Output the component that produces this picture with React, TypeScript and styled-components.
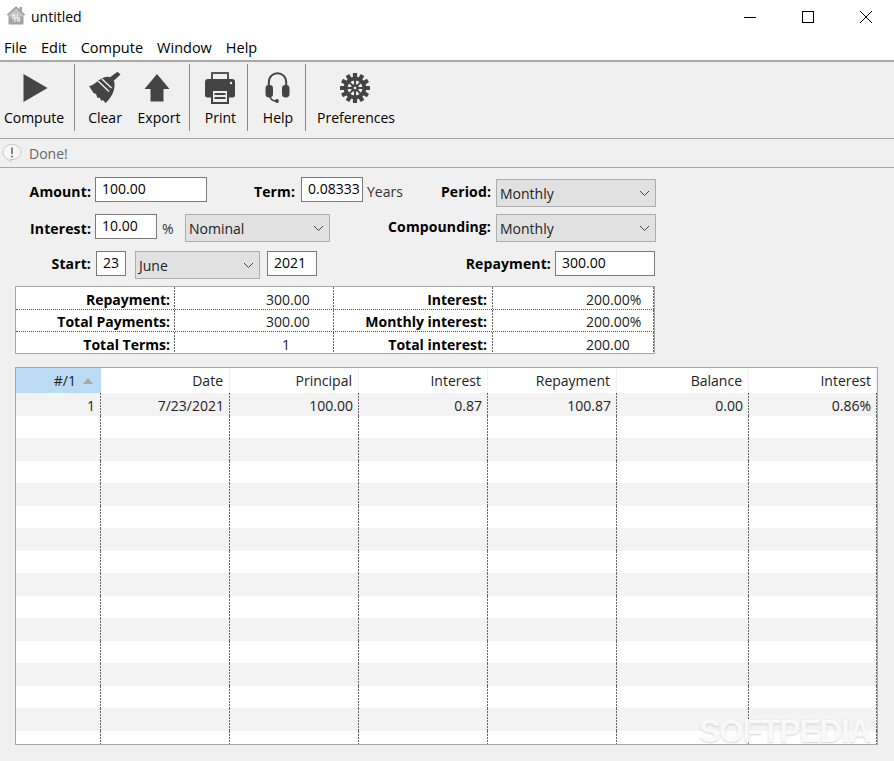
import React from 'react';
import styled, { createGlobalStyle } from 'styled-components';

const Global = createGlobalStyle`
  html, body { margin: 0; padding: 0; background: #f0f0f0; }
  #root { width: 894px; height: 761px; overflow: hidden; }
  * { box-sizing: border-box; }
`;

const Window = styled.div`
  position: relative;
  width: 894px;
  height: 761px;
  display: flex;
  flex-direction: column;
  overflow: hidden;
  background: #f0f0f0;
  color: #000;
  font-family: "Open Sans", "Noto Sans", sans-serif;
  font-size: 14px;
`;

const TitleBar = styled.div`
  height: 33px;
  background: #fff;
  display: flex;
  align-items: center;
  padding-left: 6px;
`;
const TitleLogo = styled.div`
  display: flex;
  margin-top: -3px;
`;
const TitleText = styled.span`
  margin-left: 5px;
  font-size: 14px;
`;
const WindowButtons = styled.div`
  margin-left: auto;
  display: flex;
`;
const WindowButton = styled.div`
  width: 58px;
  height: 33px;
  display: flex;
  align-items: center;
  justify-content: center;
  margin-right: ${p => p.$last ? '-1px' : '0'};
`;
const MenuBar = styled.div`
  height: 27px;
  background: #fff;
  display: flex;
  align-items: center;
  gap: 14px;
  padding: 2px 0 0 4px;
`;
const MenuItem = styled.span`
  font-size: 14.5px;
`;
const Toolbar = styled.div`
  height: 79px;
  border-top: 2px solid #a8a8a8;
  border-bottom: 1px solid #a8a8a8;
  display: flex;
  align-items: stretch;
  padding: 2px 0 7px;
`;
const ToolGroup = styled.div`
  width: ${p => p.$w}px;
  flex: none;
  display: flex;
  padding-left: ${p => p.$pl ?? 0}px;
  border-right: ${p => p.$noSep ? 'none' : '1px solid #8a8a8a'};
`;
const ToolButton = styled.div`
  width: ${p => p.$w}px;
  flex: none;
  display: flex;
  flex-direction: column;
  align-items: center;
  padding-top: 7px;
`;
const ToolIcon = styled.div`
  height: 33px;
  width: 100%;
  display: flex;
  justify-content: center;
  align-items: center;
  overflow: visible;
  padding-left: ${p => Math.max((p.$dx ?? 0) * 2, 0)}px;
  padding-right: ${p => Math.max(-(p.$dx ?? 0) * 2, 0)}px;
`;
const ToolLabel = styled.span`
  margin-top: 5px;
  font-size: 14px;
  line-height: 18px;
  white-space: nowrap;
`;
const StatusBar = styled.div`
  height: 29px;
  border-bottom: 1px solid #a8a8a8;
  display: flex;
  align-items: center;
  padding-left: 2px;
  gap: 7px;
  color: #666;
  font-size: 14px;
`;
const Form = styled.div`
  display: flex;
  flex-direction: column;
`;
const FormRow = styled.div`
  display: flex;
  align-items: flex-start;
  height: ${p => p.$h}px;
  margin-top: ${p => p.$mt}px;
`;
const Label = styled.span`
  width: ${p => p.$w}px;
  flex: none;
  text-align: right;
  font-weight: 700;
  line-height: 25px;
  margin-right: ${p => p.$gap ?? 4}px;
  padding-top: ${p => p.$top ?? 0}px;
  white-space: nowrap;
  letter-spacing: 0.12px;
`;
const Input = styled.div`
  width: ${p => p.$w}px;
  height: 25px;
  flex: none;
  background: #fff;
  border: 1px solid #7a7a7a;
  padding-left: 6px;
  line-height: 21px;
  margin-left: ${p => p.$ml ?? 0}px;
  white-space: nowrap;
  overflow: hidden;
`;
const Plain = styled.span`
  flex: none;
  margin-left: ${p => p.$ml}px;
  margin-top: 2px;
  line-height: 25px;
  color: #333;
  width: ${p => p.$w}px;
`;
const Select = styled.div`
  width: ${p => p.$w}px;
  height: 28px;
  flex: none;
  align-self: flex-end;
  margin-left: ${p => p.$ml ?? 0}px;
  background: #e1e1e1;
  border: 1px solid #adadad;
  display: flex;
  align-items: center;
  justify-content: space-between;
  padding: 0 5px 0 3px;
  color: #222;
`;
const Summary = styled.div`
  margin: 7px 0 0 15px;
  width: 640px;
  height: 68px;
  background: #fff;
  border: 1px solid #a8a8a8;
  overflow: hidden;
`;
const SummaryRow = styled.div`
  display: grid;
  grid-template-columns: 159px 159px 159px 161px;
  grid-template-rows: minmax(0, 1fr);
  height: ${p => p.$h}px;
  line-height: ${p => p.$lh}px;
  border-bottom: ${p => p.$last ? 'none' : '1px dotted #555'};
`;
const dashes = `
  background-image: linear-gradient(#666 66%, transparent 66%);
  background-size: 1px 3px;
  background-repeat: repeat-y;
  background-position: right top;
`;
const SummaryLabel = styled.div`
  ${dashes}
  text-align: right;
  font-weight: 700;
  padding-right: ${p => p.$pr}px;
  white-space: nowrap;
`;
const SummaryValue = styled.div`
  ${dashes}
  padding-left: ${p => p.$pad}px;
  white-space: nowrap;
  color: #222;
`;
const SummaryOne = styled.span`
  display: inline-block;
  margin-left: 16px;
`;
const Grid = styled.div`
  margin: 13px 0 0 15px;
  width: 863px;
  height: 378px;
  background: #fff;
  border: 1px solid #a8a8a8;
  overflow: hidden;
`;
const GridHeader = styled.div`
  display: flex;
  height: 25px;
`;
const HeaderCell = styled.div`
  width: ${p => p.$w}px;
  flex: none;
  background: ${p => p.$active ? '#bbdaf3' : '#fff'};
  border-right: 1px solid ${p => p.$active ? '#bbdaf3' : '#f0f0f0'};
  padding-right: ${p => p.$pr}px;
  line-height: 25px;
  color: #222;
  display: flex;
  justify-content: flex-end;
  align-items: center;
  gap: 7px;
`;
const SortArrow = styled.span`
  width: 0;
  height: 0;
  border-left: 5px solid transparent;
  border-right: 5px solid transparent;
  border-bottom: 6px solid #aaa9a0;
`;
const GridRow = styled.div`
  display: flex;
  height: 22.5px;
  background: ${p => p.$odd ? '#f3f3f3' : '#fff'};
`;
const GridCell = styled.div`
  ${dashes}
  width: ${p => p.$w}px;
  flex: none;
  text-align: right;
  padding-right: 6px;
  line-height: 25px;
  color: #222;
`;
const Watermark = styled.div`
  position: absolute;
  left: 699px;
  top: 713px;
  font-size: 32px;
  line-height: 36px;
  font-weight: 700;
  letter-spacing: -1.3px;
  color: rgba(255,255,255,0.85);
  text-shadow: 0 1px 2px rgba(170,170,170,0.5);
  font-family: "Liberation Sans", sans-serif;
  pointer-events: none;
  white-space: nowrap;
`;
const WatermarkMark = styled.sup`
  font-size: 9px;
  font-weight: 400;
  vertical-align: 18px;
  line-height: 0;
`;

const HomeIcon = () => (
  <svg width="20" height="20" viewBox="0 0 20 20">
    <path d="M0.5 10 L10 1 L13.5 4.2 V2 H16 V6.5 L19.5 10 L17.5 10.5 V18.5 Q17.5 19.5 16.5 19.5 H3.5 Q2.5 19.5 2.5 18.5 V10.5 Z" fill="#a4a4a4" />
    <path d="M3 10 L10 3.5 L17 10 V11.5 H3 Z" fill="#c4c4c4" />
    <text x="10" y="16.5" fontSize="10" fontWeight="700" textAnchor="middle" fill="#eee" fontFamily="Open Sans">%</text>
  </svg>
);

const PlayIcon = () => (
  <svg width="26" height="30" viewBox="0 0 26 30"><path d="M0.5 1 L24.5 15 L0.5 29 Z" fill="#444" /></svg>
);
const BroomIcon = () => (
  <svg width="34" height="34" viewBox="0 0 34 34">
    <path d="M29.5 0.8 L32.5 3.5 L24.5 11 L21 7 Z" fill="#444" />
    <path d="M21 6 C24 7 26 10 26.5 12 C27 18 25 25 17.5 32 L15 29 L13.5 30 L11.5 26.5 L9.5 27 L8 23 L5.5 22 L1 15 C6 14.5 9 10 13 8 C16 6.5 18.5 5.5 21 6 Z" fill="#444" />
    <path d="M10 10 L21 20.5 M14 8 L23.5 17" stroke="#f0f0f0" strokeWidth="1.4" fill="none" />
  </svg>
);
const ArrowIcon = () => (
  <svg width="28" height="30" viewBox="0 0 28 30"><path d="M14 1 L26.5 16 H20.5 V28.5 H7.5 V16 H1.5 Z" fill="#444" /></svg>
);
const PrintIcon = () => (
  <svg width="32" height="33" viewBox="0 0 32 33">
    <path d="M8 9 V2 H24 V9" fill="none" stroke="#555" strokeWidth="2" />
    <path d="M4 8 H28 Q31 8 31 11 V24 Q31 26.5 28.5 26.5 H3.5 Q1 26.5 1 24 V11 Q1 8 4 8 Z" fill="#444" />
    <circle cx="27" cy="12" r="1.2" fill="#f0f0f0" />
    <rect x="8" y="19" width="16" height="13" fill="#f0f0f0" stroke="#444" strokeWidth="2" />
    <path d="M10.5 23 H21.5 M10.5 27 H21.5" stroke="#444" strokeWidth="1.8" />
  </svg>
);
const HeadsetIcon = () => (
  <svg width="25" height="31" viewBox="0 0 25 31">
    <path d="M3.8 15 V10.5 C3.8 4.5 8 1.2 12.5 1.2 C17 1.2 21.2 4.5 21.2 10.5 V15" fill="none" stroke="#444" strokeWidth="2" />
    <rect x="0.5" y="13" width="7.5" height="12.5" rx="3.4" fill="#444" />
    <rect x="17" y="13" width="7.5" height="12.5" rx="3.4" fill="#444" />
    <path d="M5 25 C6 27.5 8.5 29 11.5 29" fill="none" stroke="#444" strokeWidth="1.6" />
    <circle cx="12" cy="29" r="1.9" fill="#444" />
  </svg>
);
const GearIcon = () => {
  const teeth = Array.from({ length: 12 }, (_, i) => i * 30);
  return (
    <svg width="32" height="32" viewBox="0 0 32 32">
      {teeth.map(a => (
        <rect key={a} x="13.9" y="1" width="4.2" height="6" rx="0.6" fill="#444" transform={`rotate(${a} 16 16)`} />
      ))}
      <circle cx="16" cy="16" r="9.4" fill="none" stroke="#444" strokeWidth="3.8" />
      {[0, 45, 90, 135].map(a => (
        <rect key={a} x="15" y="7" width="2" height="18" fill="#444" transform={`rotate(${a} 16 16)`} />
      ))}
      <circle cx="16" cy="16" r="3.8" fill="#444" />
      <circle cx="16" cy="16" r="1.3" fill="#f0f0f0" />
    </svg>
  );
};
const NoticeIcon = () => (
  <svg width="20" height="20" viewBox="0 0 20 20">
    <path d="M10 1.5 C15 1.5 19 4.8 19 9 C19 13 15 16.5 10 16.5 L8 16.5 L9.5 19 L5 16 C2.5 14.6 1 12 1 9 C1 4.8 5 1.5 10 1.5 Z" fill="#f7f7f7" stroke="#c8c8c8" />
    <path d="M10 4.5 V11" stroke="#666" strokeWidth="1.6" />
    <circle cx="10" cy="13.5" r="1" fill="#666" />
  </svg>
);
const Chevron = () => (
  <svg width="11" height="7" viewBox="0 0 11 7"><path d="M1 1 L5.5 5.5 L10 1" fill="none" stroke="#444" strokeWidth="1" /></svg>
);

const columns = [
  { title: '#/1', w: 85, pr: 7 },
  { title: 'Date', w: 129, pr: 6 },
  { title: 'Principal', w: 129, pr: 6 },
  { title: 'Interest', w: 129, pr: 6 },
  { title: 'Repayment', w: 129, pr: 6 },
  { title: 'Balance', w: 132, pr: 6 },
  { title: 'Interest', w: 128, pr: 5 },
];
const firstRow = ['1', '7/23/2021', '100.00', '0.87', '100.87', '0.00', '0.86%'];

const summary = [
  { a: 'Repayment:', b: '300.00', c: 'Interest:', d: '200.00%', h: 23, lh: 25 },
  { a: 'Total Payments:', b: '300.00', c: 'Monthly interest:', d: '200.00%', h: 22, lh: 24 },
  { a: 'Total Terms:', b: '1', c: 'Total interest:', d: '200.00', h: 22, lh: 25 },
];

export default function App() {
  return (
    <Window>
      <Global />
      <TitleBar>
        <TitleLogo><HomeIcon /></TitleLogo>
        <TitleText>untitled</TitleText>
        <WindowButtons>
          <WindowButton>
            <svg width="12" height="12" viewBox="0 0 12 12"><path d="M0 6.5 H12" stroke="#000" /></svg>
          </WindowButton>
          <WindowButton>
            <svg width="12" height="12" viewBox="0 0 12 12"><rect x="0.5" y="0.5" width="11" height="11" fill="none" stroke="#000" /></svg>
          </WindowButton>
          <WindowButton $last>
            <svg width="12" height="12" viewBox="0 0 12 12"><path d="M0 0 L12 12 M12 0 L0 12" stroke="#000" /></svg>
          </WindowButton>
        </WindowButtons>
      </TitleBar>
      <MenuBar>
        {['File', 'Edit', 'Compute', 'Window', 'Help'].map(m => <MenuItem key={m}>{m}</MenuItem>)}
      </MenuBar>
      <Toolbar>
        <ToolGroup $w={75}>
          <ToolButton $w={68}><ToolIcon $dx={2}><PlayIcon /></ToolIcon><ToolLabel>Compute</ToolLabel></ToolButton>
        </ToolGroup>
        <ToolGroup $w={115}>
          <ToolButton $w={60}><ToolIcon><BroomIcon /></ToolIcon><ToolLabel>Clear</ToolLabel></ToolButton>
          <ToolButton $w={48}><ToolIcon $dx={-2}><ArrowIcon /></ToolIcon><ToolLabel>Export</ToolLabel></ToolButton>
        </ToolGroup>
        <ToolGroup $w={58} $pl={2}>
          <ToolButton $w={57}><ToolIcon $dx={-1}><PrintIcon /></ToolIcon><ToolLabel>Print</ToolLabel></ToolButton>
        </ToolGroup>
        <ToolGroup $w={58} $pl={1}>
          <ToolButton $w={58}><ToolIcon $dx={-1}><HeadsetIcon /></ToolIcon><ToolLabel>Help</ToolLabel></ToolButton>
        </ToolGroup>
        <ToolGroup $w={100} $noSep>
          <ToolButton $w={100}><ToolIcon $dx={-1}><GearIcon /></ToolIcon><ToolLabel>Preferences</ToolLabel></ToolButton>
        </ToolGroup>
      </Toolbar>
      <StatusBar><NoticeIcon /><span>Done!</span></StatusBar>
      <Form>
        <FormRow $h={30} $mt={9}>
          <Label $w={91} $top={2}>Amount:</Label>
          <Input $w={112}>100.00</Input>
          <Label $w={88} $gap={6} $top={2}>Term:</Label>
          <Input $w={62}>0.08333</Input>
          <Plain $ml={4} $w={40}>Years</Plain>
          <Label $w={84} $gap={5} $top={2}>Period:</Label>
          <Select $w={160}><span>Monthly</span><Chevron /></Select>
        </FormRow>
        <FormRow $h={28} $mt={7}>
          <Label $w={91} $top={2}>Interest:</Label>
          <Input $w={62}>10.00</Input>
          <Plain $ml={5} $w={23}>%</Plain>
          <Select $w={145}><span>Nominal</span><Chevron /></Select>
          <Label $w={161} $gap={5}>Compounding:</Label>
          <Select $w={160}><span>Monthly</span><Chevron /></Select>
        </FormRow>
        <FormRow $h={28} $mt={9}>
          <Label $w={91} $gap={5}>Start:</Label>
          <Input $w={30}>23</Input>
          <Select $w={125} $ml={9}><span>June</span><Chevron /></Select>
          <Input $w={50} $ml={7}>2021</Input>
          <Label $w={234}>Repayment:</Label>
          <Input $w={100}>300.00</Input>
        </FormRow>
      </Form>
      <Summary>
        {summary.map((r, i) => (
          <SummaryRow key={r.a} $h={r.h} $lh={r.lh} $last={i === 2}>
            <SummaryLabel $pr={5}>{r.a}</SummaryLabel>
            <SummaryValue $pad={91}>{r.b === '1' ? <SummaryOne>1</SummaryOne> : r.b}</SummaryValue>
            <SummaryLabel $pr={6}>{r.c}</SummaryLabel>
            <SummaryValue $pad={93}>{r.d}</SummaryValue>
          </SummaryRow>
        ))}
      </Summary>
      <Grid>
        <GridHeader>
          {columns.map((c, i) => (
            <HeaderCell key={i} $w={c.w} $pr={c.pr} $active={i === 0}>
              {c.title}{i === 0 && <SortArrow />}
            </HeaderCell>
          ))}
        </GridHeader>
        {Array.from({ length: 16 }, (_, r) => (
          <GridRow key={r} $odd={r % 2 === 0}>
            {columns.map((c, i) => (
              <GridCell key={i} $w={c.w}>{r === 0 ? firstRow[i] : ''}</GridCell>
            ))}
          </GridRow>
        ))}
      </Grid>
      <Watermark>SOFTPEDIA<WatermarkMark>®</WatermarkMark></Watermark>
    </Window>
  );
}
